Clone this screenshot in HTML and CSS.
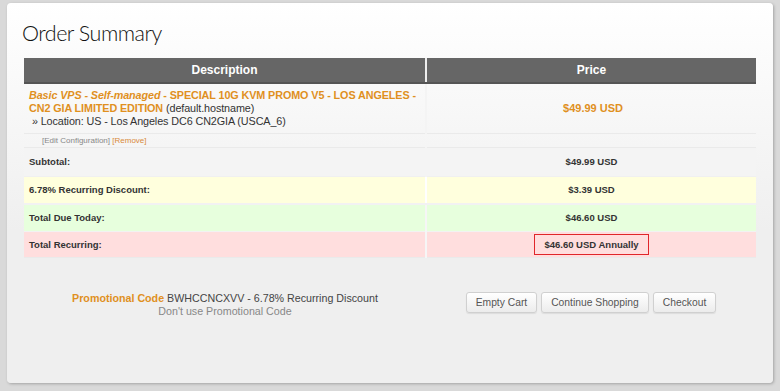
FILE: index.html
```html
<!DOCTYPE html>
<html lang="en">

<head>
    <meta charset="utf-8">
    <meta name="viewport" content="width=device-width, initial-scale=1.0">
    <title>Order Summary</title>
    <link rel="stylesheet" href="styles.css">
</head>

<body>
    <section class="panel">
        <h1>Order Summary</h1>

        <table class="cart">
            <thead>
                <tr>
                    <th class="desc">Description</th>
                    <th class="price">Price</th>
                </tr>
            </thead>
            <tbody>
                <tr class="product">
                    <td>
                        <strong><em>Basic VPS - Self-managed</em> - SPECIAL 10G KVM PROMO V5 - LOS ANGELES - CN2 GIA LIMITED EDITION</strong> (default.hostname)<br>
                        &nbsp;&raquo; Location: US - Los Angeles DC6 CN2GIA (USCA_6)
                    </td>
                    <td class="amount orange">$49.99 USD</td>
                </tr>
                <tr class="config">
                    <td><a href="#">[Edit Configuration]</a> <a href="#" class="remove">[Remove]</a></td>
                    <td></td>
                </tr>
                <tr class="subtotal">
                    <td>Subtotal:</td>
                    <td class="amount">$49.99 USD</td>
                </tr>
                <tr class="discount">
                    <td>6.78% Recurring Discount:</td>
                    <td class="amount">$3.39 USD</td>
                </tr>
                <tr class="due">
                    <td>Total Due Today:</td>
                    <td class="amount">$46.60 USD</td>
                </tr>
                <tr class="recurring">
                    <td>Total Recurring:</td>
                    <td class="amount"><span class="box">$46.60 USD Annually</span></td>
                </tr>
            </tbody>
        </table>

        <div class="bottom">
            <div class="promo">
                <p><b>Promotional Code</b> BWHCCNCXVV - 6.78% Recurring Discount</p>
                <p class="nopromo">Don't use Promotional Code</p>
            </div>
            <div class="knapper">
                <button>Empty Cart</button>
                <button>Continue Shopping</button>
                <button>Checkout</button>
            </div>
        </div>
    </section>
</body></html>
```

FILE: styles.css
```css
* {
    box-sizing: border-box;
}

body {
    margin: 0;
    padding: 3px 7px 8px 7px;
    background-color: #d9d9d9;
    font-family: "Liberation Sans", Arial, sans-serif;
}

.panel {
    height: 380px;
    padding: 0 17px;
    background: linear-gradient(#ffffff, #efefef 60%);
    border-radius: 4px;
    box-shadow: 1px 1px 3px rgba(0, 0, 0, 0.25);
}

h1 {
    margin: 0 0 0 -2px;
    padding-top: 15px;
    height: 55px;
    font-family: Lato, sans-serif;
    font-weight: 300;
    font-size: 21.5px;
    letter-spacing: -0.5px;
    line-height: 30px;
    color: #111;
}

.cart {
    width: 100%;
    border-collapse: collapse;
}

.cart th {
    height: 25px;
    padding: 0;
    background-color: #666;
    border-bottom: 2px solid #555;
    color: #fff;
    font-size: 12px;
    font-weight: bold;
    text-align: center;
}

.cart th.desc {
    width: 402px;
}

.cart th.price {
    border-left: 2px solid #eee;
}

.cart td {
    padding: 0 5px;
    font-size: 9.5px;
    font-weight: bold;
    color: #333;
    border-bottom: 1px solid #eaeaea;
}

.cart td.amount {
    text-align: center;
    border-left: 2px solid #f4f4f4;
}

.product td {
    height: 50px;
    padding: 1px 2px 0 5px;
    font-size: 10.8px;
    font-weight: normal;
    line-height: 13px;
    letter-spacing: -0.1px;
    color: #333;
}

.product strong {
    color: #e0901e;
}

.product td.amount {
    font-size: 11px;
    letter-spacing: 0;
}

.cart td.orange {
    color: #e0901e;
    font-weight: bold;
}

.config td {
    height: 14px;
    padding-left: 18px;
    font-size: 8px;
    font-weight: normal;
}

.config a {
    color: #888;
    text-decoration: none;
}

.config a.remove {
    color: #d98a3a;
}

.subtotal td {
    height: 29px;
    background-color: #f4f4f4;
    border-bottom: 1px solid #f0f0f0;
}

.discount td {
    height: 28px;
    background-color: #ffffdd;
    border-bottom: 2px solid #f2f2f2;
}

.due td {
    height: 27px;
    background-color: #e7ffdd;
    border-bottom: 1px solid #f2f2f2;
}

.recurring td {
    height: 26px;
    background-color: #ffdede;
}

.discount td.amount {
    border-left-color: #fff;
}

.due td.amount,
.recurring td.amount {
    border-left-color: #f6f6f6;
}

.box {
    display: inline-block;
    width: 115px;
    padding: 4px 0 4px 0;
    border: 1px solid #e0262a;
    text-align: center;
}

.bottom {
    display: flex;
    margin-top: 34px;
}

.promo {
    width: 402px;
    text-align: center;
    font-size: 10.7px;
    color: #444;
}

.promo p {
    margin: 0;
    line-height: 13px;
}

.promo b {
    color: #e0901e;
}

.nopromo {
    color: #888;
}

.knapper {
    flex: 1;
    display: flex;
    justify-content: center;
    gap: 4px;
    padding-top: 0;
}

button {
    height: 21px;
    padding: 0 9px;
    border: 1px solid #d0d0d0;
    border-radius: 3px;
    background: linear-gradient(#ffffff, #ececec);
    box-shadow: 0 1px 1px rgba(0, 0, 0, 0.08);
    font-family: "Liberation Sans", Arial, sans-serif;
    font-size: 10.3px;
    color: #555;
    cursor: pointer;
}
```
